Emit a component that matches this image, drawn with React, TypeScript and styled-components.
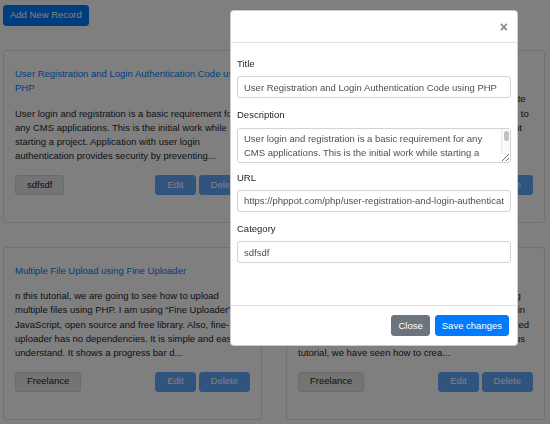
import React from "react";
import styled, { createGlobalStyle } from "styled-components";

const GlobalStyle = createGlobalStyle`
  * { box-sizing: border-box; }
  body {
    margin: 0;
    background: #fff;
    color: #212529;
    font-family: "Liberation Sans", Arial, sans-serif;
    font-size: 9.5px;
    line-height: 14.3px;
  }
`;

const Page = styled.div`
  padding: 5px 5px 5px 3px;
`;

const AddButton = styled.button`
  height: 21px;
  padding: 0 6px;
  border: 1px solid #007bff;
  border-radius: 3px;
  background: #007bff;
  color: #fff;
  font: inherit;
`;

const CardGrid = styled.div`
  display: grid;
  grid-template-columns: 259px 259px;
  gap: 24px;
  margin-top: 24px;
`;

const Card = styled.div`
  display: flex;
  flex-direction: column;
  border: 1px solid #e0e0e0;
  border-radius: 3px;
  padding: 16px 11px 27px;
`;

const CardTitle = styled.a`
  display: block;
  color: #007bff;
  text-decoration: none;
  margin-bottom: 11px;
`;

const CardText = styled.p`
  flex: 1;
  margin: 0;
`;

const CardActions = styled.div`
  display: flex;
  justify-content: space-between;
  margin-top: 11px;
`;

type Tone = "light" | "primary" | "secondary" | "blue";

const toneBg: Record<Tone, string> = {
  light: "#e8e8e8",
  primary: "#62a8ff",
  secondary: "#6c757d",
  blue: "#007bff",
};

const Btn = styled.button<{ $tone: Tone }>`
  height: 20px;
  padding: 0 11px;
  border-radius: 3px;
  font: inherit;
  border: 1px solid ${(p) => (p.$tone === "light" ? "#d6d6d6" : toneBg[p.$tone])};
  background: ${(p) => toneBg[p.$tone]};
  color: ${(p) => (p.$tone === "light" ? "#212529" : "#fff")};
`;

const BtnGroup = styled.div`
  display: flex;
  gap: 3px;
`;

const Backdrop = styled.div`
  position: fixed;
  inset: 0;
  z-index: 1040;
  background: rgba(0, 0, 0, 0.5);
`;

const Dialog = styled.div`
  position: fixed;
  z-index: 1050;
  left: 230px;
  top: 10px;
  width: 288px;
  background: #fff;
  border: 1px solid rgba(0, 0, 0, 0.2);
  border-radius: 4px;
`;

const DialogHeader = styled.div`
  height: 32px;
  display: flex;
  align-items: center;
  justify-content: flex-end;
  padding: 0 9px;
  border-bottom: 1px solid #dee2e6;
`;

const CloseX = styled.span`
  font-size: 14px;
  font-weight: 700;
  color: #000;
  opacity: 0.5;
  line-height: 1;
`;

const DialogBody = styled.div`
  padding: 14px 6px 42px;
`;

const Field = styled.div<{ $gap?: number }>`
  margin-top: ${(p) => p.$gap ?? 10}px;
  &:first-child { margin-top: 0; }
`;

const Label = styled.label`
  display: block;
  margin-bottom: 5px;
`;

const Input = styled.input`
  display: block;
  width: 100%;
  height: 22px;
  padding: 0 6px;
  border: 1px solid #ced4da;
  border-radius: 3px;
  color: #495057;
  font: inherit;
`;

const TextAreaWrap = styled.div`
  position: relative;
`;

const TextArea = styled.textarea`
  display: block;
  width: 100%;
  height: 35px;
  padding: 3px 16px 3px 6px;
  border: 1px solid #ced4da;
  border-radius: 3px;
  color: #495057;
  font: inherit;
  resize: vertical;
  overflow: hidden;
`;

/* scroll track drawn over the textarea's right edge */
const ScrollTrack = styled.div`
  position: absolute;
  top: 1px;
  right: 1px;
  bottom: 9px;
  width: 9px;
  background: #fafafa;
  border-left: 1px solid #e8e8e8;
  pointer-events: none;
`;

const ScrollThumb = styled.div`
  margin: 2px auto 0;
  width: 5px;
  height: 10px;
  border-radius: 3px;
  background: #c1c1c1;
`;

const DialogFooter = styled.div`
  height: 40px;
  display: flex;
  align-items: center;
  justify-content: flex-end;
  gap: 5px;
  padding: 0 8px;
  border-top: 1px solid #dee2e6;
`;

const FooterBtn = styled(Btn)`
  height: 21px;
  padding: 0 6px;
`;

type Post = { title: string; body: string; category: string };

const posts: Post[] = [
  {
    title: "User Registration and Login Authentication Code using PHP",
    body:
      "User login and registration is a basic requirement for any CMS applications. This is the initial work while starting a project. Application with user login authentication provides security by preventing...",
    category: "sdfsdf",
  },
  {
    title: "PHP Contact Form with Google reCAPTCHA",
    body:
      "Contact forms are an important piece of every website and a way for visitors to contact you. Let us see how to create a contact form with Google reCAPTCHA to cut spam submissions. It uses a simple HTML form and PHP to send the mail...",
    category: "sdfsdf",
  },
  {
    title: "Multiple File Upload using Fine Uploader",
    body:
      "n this tutorial, we are going to see how to upload multiple files using PHP. I am using \u201cFine Uploader\u201d JavaScript, open source and free library. Also, fine-uploader has no dependencies. It is simple and easy to understand. It shows a progress bar d...",
    category: "Freelance",
  },
  {
    title: "Drag and Drop File Upload using DropzoneJS",
    body:
      "Drag and drop is a user-friendly feature for uploading files. In this example, I have added the DropzoneJS in an HTML5 demo page. The dropped files are uploaded to the server using a jQuery AJAX call. In the previous tutorial, we have seen how to crea...",
    category: "Freelance",
  },
];

const PostCard = ({ post }: { post: Post }) => (
  <Card>
    <CardTitle href="#">{post.title}</CardTitle>
    <CardText>{post.body}</CardText>
    <CardActions>
      <Btn $tone="light">{post.category}</Btn>
      <BtnGroup>
        <Btn $tone="primary">Edit</Btn>
        <Btn $tone="primary">Delete</Btn>
      </BtnGroup>
    </CardActions>
  </Card>
);

const App = () => {
  const first = posts[0];
  return (
    <>
      <GlobalStyle />
      <Page>
        <AddButton>Add New Record</AddButton>
        <CardGrid>
          {posts.map((p) => (
            <PostCard key={p.title} post={p} />
          ))}
        </CardGrid>
      </Page>
      <Backdrop />
      <Dialog>
        <DialogHeader>
          <CloseX>×</CloseX>
        </DialogHeader>
        <DialogBody>
          <Field>
            <Label>Title</Label>
            <Input defaultValue={first.title} />
          </Field>
          <Field>
            <Label>Description</Label>
            <TextAreaWrap>
              <TextArea defaultValue={first.body} />
              <ScrollTrack>
                <ScrollThumb />
              </ScrollTrack>
            </TextAreaWrap>
          </Field>
          <Field $gap={8}>
            <Label>URL</Label>
            <Input defaultValue="https://phppot.com/php/user-registration-and-login-authentication-code-using-php/" />
          </Field>
          <Field>
            <Label>Category</Label>
            <Input defaultValue={first.category} />
          </Field>
        </DialogBody>
        <DialogFooter>
          <FooterBtn $tone="secondary">Close</FooterBtn>
          <FooterBtn $tone="blue">Save changes</FooterBtn>
        </DialogFooter>
      </Dialog>
    </>
  );
};

export default App;
